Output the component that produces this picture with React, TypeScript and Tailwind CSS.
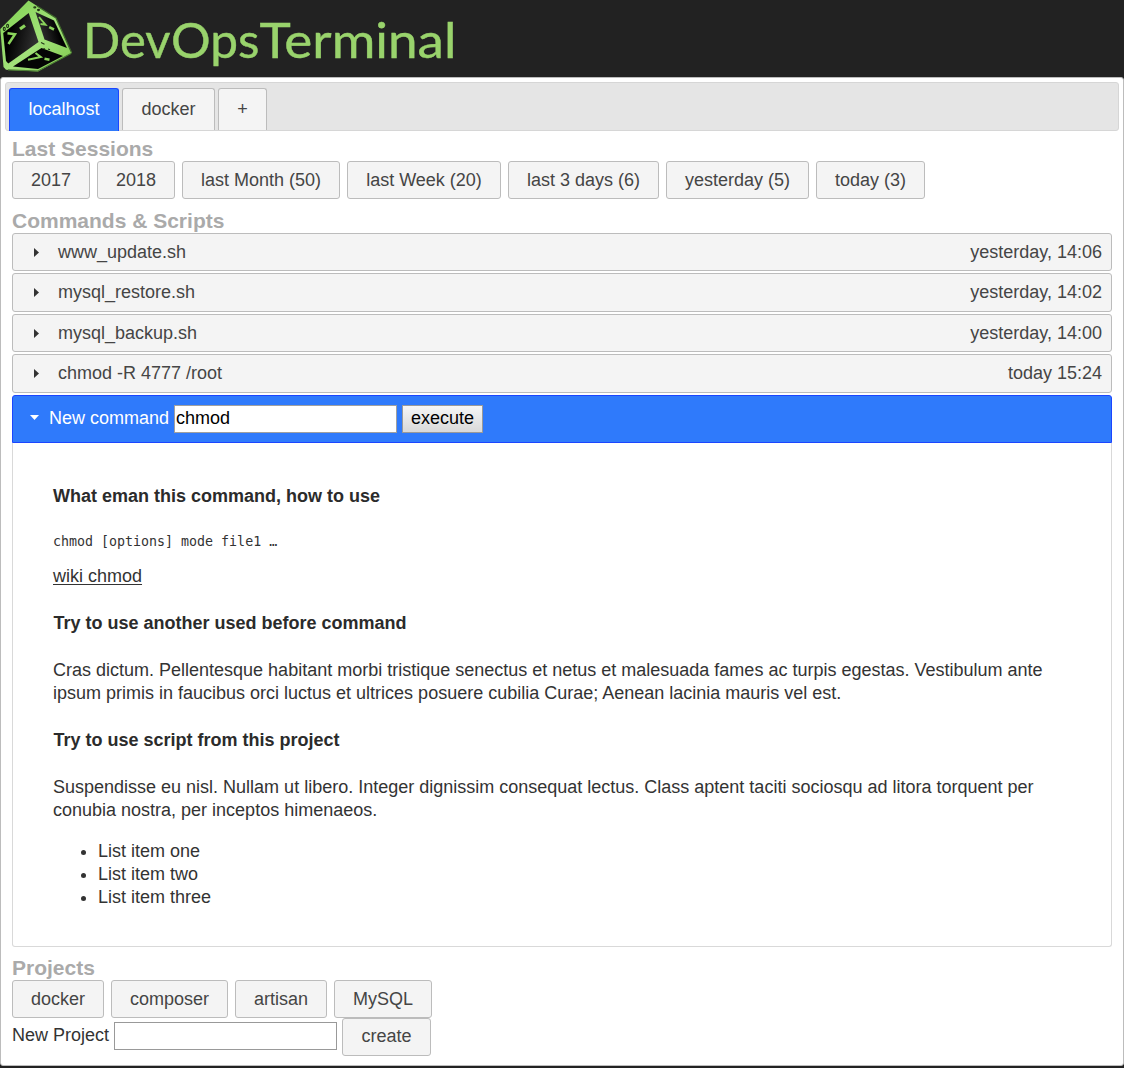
import React from "react";

const button =
  "h-[38px] shrink-0 rounded-[3px] border border-[#bcbcbc] bg-[#f4f4f4] text-center text-[#454545]";

const sessions = [
  { label: "2017", width: "w-[78px]" },
  { label: "2018", width: "w-[78px]" },
  { label: "last Month (50)", width: "w-[158px]" },
  { label: "last Week (20)", width: "w-[154px]" },
  { label: "last 3 days (6)", width: "w-[151px]" },
  { label: "yesterday (5)", width: "w-[143px]" },
  { label: "today (3)", width: "w-[109px]" },
];

const projects = [
  { label: "docker", width: "w-[92px]" },
  { label: "composer", width: "w-[117px]" },
  { label: "artisan", width: "w-[92px]" },
  { label: "MySQL", width: "w-[98px]" },
];

const commands = [
  { name: "www_update.sh", time: "yesterday, 14:06", box: "h-[38px] mb-[2px]" },
  { name: "mysql_restore.sh", time: "yesterday, 14:02", box: "h-[39px] mb-[2px]" },
  { name: "mysql_backup.sh", time: "yesterday, 14:00", box: "h-[38px] mb-[2px]" },
  { name: "chmod -R 4777 /root", time: "today 15:24", box: "h-[39px] mb-[2px]" },
];

function CubeLogo() {
  return (
    <svg width="74" height="74" viewBox="0 0 74 74" className="shrink-0">
      <defs>
        <linearGradient id="edge" x1="0" y1="0" x2="1" y2="1">
          <stop offset="0" stopColor="#7fd050" />
          <stop offset="0.55" stopColor="#a2e27a" />
          <stop offset="1" stopColor="#7fc94b" />
        </linearGradient>
        <linearGradient id="face" x1="0" y1="0" x2="1" y2="0.3">
          <stop offset="0.3" stopColor="#000" />
          <stop offset="1" stopColor="#303030" />
        </linearGradient>
        <linearGradient id="side" x1="0" y1="0.3" x2="1" y2="0">
          <stop offset="0" stopColor="#343434" />
          <stop offset="0.6" stopColor="#020202" />
        </linearGradient>
      </defs>
      <path d="M28.5 0.5 56 18 71.8 53 38 71.5 6 69.8 3.5 67 0.3 29Z" fill="url(#edge)" />
      <path d="M28.7 13 38.5 42 8.3 63.5 6 61 3.2 33Z" fill="url(#face)" />
      <path d="M35.5 12 54 20.5 67 48 44.5 39.5Z" fill="url(#side)" />
      <path d="M41.5 48 63 56 38 69 13 66.5Z" fill="#050505" />
      <path d="M37 6 56 18 71.5 52.5" fill="none" stroke="#3d672a" strokeWidth="1.3" />
      <path d="M8 69.8 38 71 71 53.5" fill="none" stroke="#4b7d33" strokeWidth="1.2" />
      <g fill="none" stroke="#8ad35b" strokeWidth="2.5">
        <path d="M7.5 33.2 15 34.2 8.5 44" />
        <path d="M20 29 25 25.5" strokeWidth="3.2" />
        <path d="M39 17 45.5 24.7 40.5 24" strokeWidth="1.9" />
        <path d="M49.2 27.2 54 29.5" strokeWidth="2.5" />
        <path d="M35.5 53 40.7 57 28 59.7" strokeWidth="2.1" />
        <path d="M44.5 58.8 49.5 59.7" strokeWidth="2.6" />
      </g>
      <g fill="none" stroke="#213516" strokeWidth="1.1">
        <ellipse cx="4.3" cy="29" rx="1" ry="1.6" />
        <ellipse cx="7.6" cy="26" rx="1" ry="1.6" />
        <ellipse cx="34.8" cy="7.4" rx="1" ry="0.6" />
        <ellipse cx="38.5" cy="10" rx="1" ry="0.6" />
        <path d="M41 42.5 44.5 44.2M43.5 48.5 45 49M48 49 50 49.7" />
      </g>
    </svg>
  );
}

function Heading({ children, className }: { children: React.ReactNode; className: string }) {
  return <h2 className={`text-[21px] leading-[24px] font-bold text-[#aaa] ${className}`}>{children}</h2>;
}

export default function App() {
  return (
    <div className="h-[1068px] w-[1124px] overflow-hidden bg-[#222] font-['Liberation_Sans',Arial,sans-serif] text-[18px] text-[#333]">
      <header className="flex h-[77px] items-start">
        <CubeLogo />
        <svg width="400" height="77" aria-label="DevOpsTerminal">
          <text y="58" fill="#99d36c" stroke="#99d36c" strokeWidth="0.4" fontFamily="Lato, sans-serif" fontSize="48.5">
            <tspan x="9" textLength="87.5" lengthAdjust="spacingAndGlyphs">Dev</tspan>
            <tspan x="97" textLength="88.5" lengthAdjust="spacingAndGlyphs">Ops</tspan>
            <tspan x="185.5" textLength="197" lengthAdjust="spacingAndGlyphs">Terminal</tspan>
          </text>
        </svg>
      </header>

      <main className="h-[989px] rounded-[3px] border border-[#bcbcbc] bg-white px-[4px] pt-[4px]">
        <nav className="flex h-[49px] items-end gap-[3px] rounded-[3px] border border-[#d6d6d6] bg-[#e5e5e5] pl-[3px]">
          <button className="-mb-px h-[43px] w-[110px] rounded-t-[3px] border border-b-0 border-[#1b45ff] bg-[#2f7afb] pb-[2px] leading-[40px] text-white">localhost</button>
          <button className="h-[42px] w-[93px] rounded-t-[3px] border border-b-0 border-[#bcbcbc] bg-[#f4f4f4] pb-px leading-[40px] text-[#454545]">docker</button>
          <button className="h-[42px] w-[49px] rounded-t-[3px] border border-b-0 border-[#bcbcbc] bg-[#f4f4f4] pb-px leading-[40px] text-[#454545]">+</button>
        </nav>

        <div className="px-[7px]">
          <Heading className="mt-[6px]">Last Sessions</Heading>
          <div className="flex gap-[7px]">
            {sessions.map((s) => (
              <button key={s.label} className={`${button} leading-[36px] ${s.width}`}>{s.label}</button>
            ))}
          </div>

          <Heading className="mt-[10px]">Commands &amp; Scripts</Heading>
          <div>
            {commands.map((c) => (
              <div key={c.name} className={`flex items-center rounded-[3px] border border-[#bcbcbc] bg-[#f4f4f4] pr-[9px] pl-[21px] text-[#454545] ${c.box}`}>
                <svg width="5" height="9" viewBox="0 0 5 9" className="mr-[19px]">
                  <path d="M0 0 5 4.5 0 9Z" fill="#333" />
                </svg>
                <span>{c.name}</span>
                <span className="ml-auto">{c.time}</span>
              </div>
            ))}
          </div>

          <div className="flex h-[48px] items-center rounded-t-[3px] border border-[#1b45ff] bg-[#2f7afb] pl-[17px] text-white">
            <svg width="9" height="5" viewBox="0 0 9 5" className="mr-[10px] -translate-y-[2px]">
              <path d="M0 0H9L4.5 5Z" fill="#fff" />
            </svg>
            <span className="w-[125px] -translate-y-px">New command</span>
            <input defaultValue="chmod" className="h-[28px] w-[223px] border border-[#a0a0a0] bg-white px-[1px] pb-[2px] text-black outline-none" />
            <button className="ml-[5px] h-[28px] w-[81px] border border-[#999] bg-linear-to-b from-[#f6f6f6] to-[#d9d9d9] pb-[2px] leading-[24px] text-black">execute</button>
          </div>

          <section className="h-[504px] rounded-b-[3px] border border-t-0 border-[#d9d9d9] px-[40px] pt-[42px] leading-[23px] text-[#333]">
            <h3 className="font-bold text-[#2b2b2b]">What eman this command, how to use</h3>
            <pre className="mt-[22px] h-[23px] font-['DejaVu_Sans_Mono',monospace] text-[13.3px] leading-[23px]">chmod [options] mode file1 …</pre>
            <a className="mt-[12px] block underline underline-offset-[2px]">wiki chmod</a>
            <h3 className="mt-[24px] pl-[0.5px] font-bold text-[#2b2b2b]">Try to use another used before command</h3>
            <p className="mt-[24px]">
              Cras dictum. Pellentesque habitant morbi tristique senectus et netus et malesuada fames ac turpis egestas. Vestibulum ante
              <br />
              ipsum primis in faucibus orci luctus et ultrices posuere cubilia Curae; Aenean lacinia mauris vel est.
            </p>
            <h3 className="mt-[24px] pl-[0.5px] font-bold text-[#2b2b2b]">Try to use script from this project</h3>
            <p className="mt-[24px]">
              Suspendisse eu nisl. Nullam ut libero. Integer dignissim consequat lectus. Class aptent taciti sociosqu ad litora torquent per
              <br />
              conubia nostra, per inceptos himenaeos.
            </p>
            <ul className="mt-[18px] list-disc pl-[45px]">
              <li>List item one</li>
              <li>List item two</li>
              <li>List item three</li>
            </ul>
          </section>

          <Heading className="mt-[9px]">Projects</Heading>
          <div className="flex gap-[7px]">
            {projects.map((p) => (
              <button key={p.label} className={`${button} leading-[36px] ${p.width}`}>{p.label}</button>
            ))}
          </div>
          <div className="flex items-start">
            <label className="mt-[5px] w-[102px] leading-[24px]">New Project</label>
            <input aria-label="New project name" className="mt-[4px] h-[28px] w-[223px] border border-[#999] bg-white px-[1px] outline-none" />
            <button className={`${button} ml-[5px] w-[89px] pb-[2px] leading-[34px]`}>create</button>
          </div>
        </div>
      </main>
    </div>
  );
}
